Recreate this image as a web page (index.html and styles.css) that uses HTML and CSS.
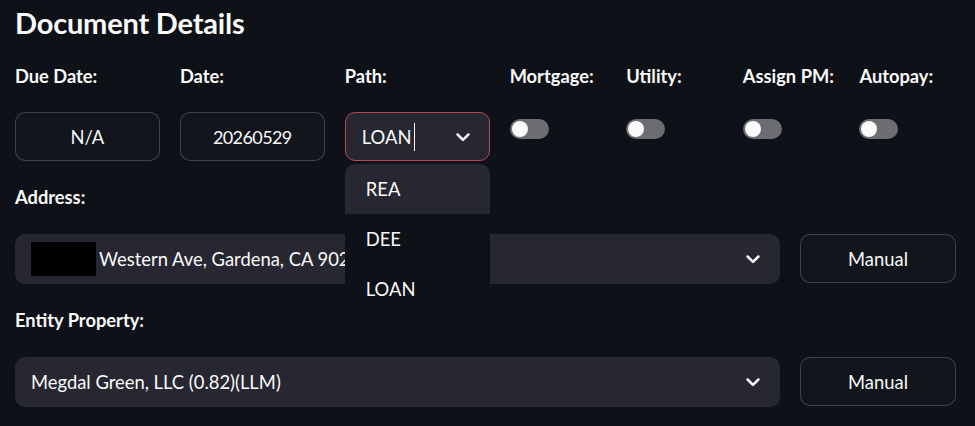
FILE: index.html
```html
<!DOCTYPE html>
<html>
<head>
<meta charset="utf-8">
<link rel="stylesheet" href="styles.css">
</head>
<body>
<main class="page">
  <h3 class="title">Document Details</h3>

  <div class="top-row">
    <div class="col wide">
      <div class="label">Due Date:</div>
      <div class="btn">N/A</div>
    </div>
    <div class="col wide">
      <div class="label">Date:</div>
      <div class="btn num">20260529</div>
    </div>
    <div class="col wide path-col">
      <div class="label">Path:</div>
      <div class="select focused">
        <span class="value">LOAN<span class="caret"></span></span>
        <svg class="chev" viewBox="0 0 24 24"><path d="M5.5 9l6.5 6.5 6.5-6.5"/></svg>
      </div>
      <ul class="menu">
        <li class="item active">REA</li>
        <li class="item">DEE</li>
        <li class="item">LOAN</li>
      </ul>
    </div>
    <div class="col narrow">
      <div class="label">Mortgage:</div>
      <div class="toggle"><span class="knob"></span></div>
    </div>
    <div class="col narrow">
      <div class="label">Utility:</div>
      <div class="toggle"><span class="knob"></span></div>
    </div>
    <div class="col narrow">
      <div class="label">Assign PM:</div>
      <div class="toggle"><span class="knob"></span></div>
    </div>
    <div class="col narrow">
      <div class="label">Autopay:</div>
      <div class="toggle"><span class="knob"></span></div>
    </div>
  </div>

  <div class="label block-label">Address:</div>
  <div class="field-row">
    <div class="select">
      <span class="value"><span class="redact"></span>Western Ave, Gardena, CA 90247</span>
      <svg class="chev" viewBox="0 0 24 24"><path d="M5.5 9l6.5 6.5 6.5-6.5"/></svg>
    </div>
    <div class="btn">Manual</div>
  </div>

  <div class="label block-label">Entity Property:</div>
  <div class="field-row">
    <div class="select">
      <span class="value">Megdal Green, LLC (0.82)(LLM)</span>
      <svg class="chev" viewBox="0 0 24 24"><path d="M5.5 9l6.5 6.5 6.5-6.5"/></svg>
    </div>
    <div class="btn">Manual</div>
  </div>
</main>
</body>
</html>
```

FILE: styles.css
```css
* { box-sizing: border-box; }

html, body {
  margin: 0;
  background: #0e1117;
  color: #fafafa;
  font-family: "Lato", "Liberation Sans", sans-serif;
  overflow: hidden;
}

.page {
  width: 941px;
  margin-left: 15px;
  padding-top: 4px;
}

.title {
  margin: 0;
  font-size: 29px;
  font-weight: 700;
  line-height: 38px;
  letter-spacing: -0.2px;
}

.label {
  height: 25px;
  line-height: 25px;
  font-size: 18.3px;
  font-weight: 700;
}

.top-row {
  display: flex;
  gap: 20px;
  margin-top: 22px;
}

.col { display: flex; flex-direction: column; gap: 23px; min-width: 0; }
.col.wide { flex: 1.5 1 0; }
.col.narrow { flex: 1 1 0; }
.path-col { position: relative; }

.btn {
  height: 49px;
  border: 1px solid rgba(250, 250, 250, 0.2);
  border-radius: 10px;
  background: #12151c;
  display: flex;
  align-items: center;
  justify-content: center;
  font-size: 18.4px;
}

.btn.num { letter-spacing: -0.6px; font-size: 18px; }

.select {
  height: 50px;
  border-radius: 10px;
  background: #262730;
  display: flex;
  align-items: center;
  padding: 0 17px 0 16px;
  font-size: 18.4px;
  min-width: 0;
}

.select.focused {
  height: 49px;
  border: 1px solid #b8494f;
  padding: 0 16px 0 16px;
}

.value {
  flex: 1;
  display: flex;
  align-items: center;
  white-space: nowrap;
  overflow: hidden;
}

.caret {
  display: inline-block;
  width: 1px;
  height: 28px;
  background: #fafafa;
  margin-left: 3px;
}

.chev {
  width: 20px;
  height: 20px;
  flex: none;
  fill: none;
  stroke: #fafafa;
  stroke-width: 3;
  stroke-linecap: round;
  stroke-linejoin: round;
}

.redact {
  display: inline-block;
  width: 68px;
  height: 34px;
  background: #000;
  margin-left: -3px;
  margin-right: 3px;
}

.toggle {
  width: 39px;
  height: 20px;
  margin-top: 7px;
  border-radius: 10px;
  background: #6c6d72;
  position: relative;
}

.knob {
  position: absolute;
  left: 2px;
  top: 2px;
  width: 16px;
  height: 16px;
  border-radius: 50%;
  background: #fafafa;
}

.menu {
  position: absolute;
  top: 100px;
  left: 0;
  width: 100%;
  margin: 0;
  padding: 0;
  list-style: none;
  background: #0e1117;
  border-radius: 10px;
  z-index: 5;
}

.item {
  height: 50px;
  line-height: 50px;
  padding-left: 21px;
  font-size: 18.4px;
}

.item.active {
  background: #262730;
  border-radius: 10px 10px 0 0;
}

.block-label { margin-top: 24px; }

.field-row {
  display: grid;
  grid-template-columns: 1fr 156px;
  gap: 20px;
  margin-top: 24px;
}
```
